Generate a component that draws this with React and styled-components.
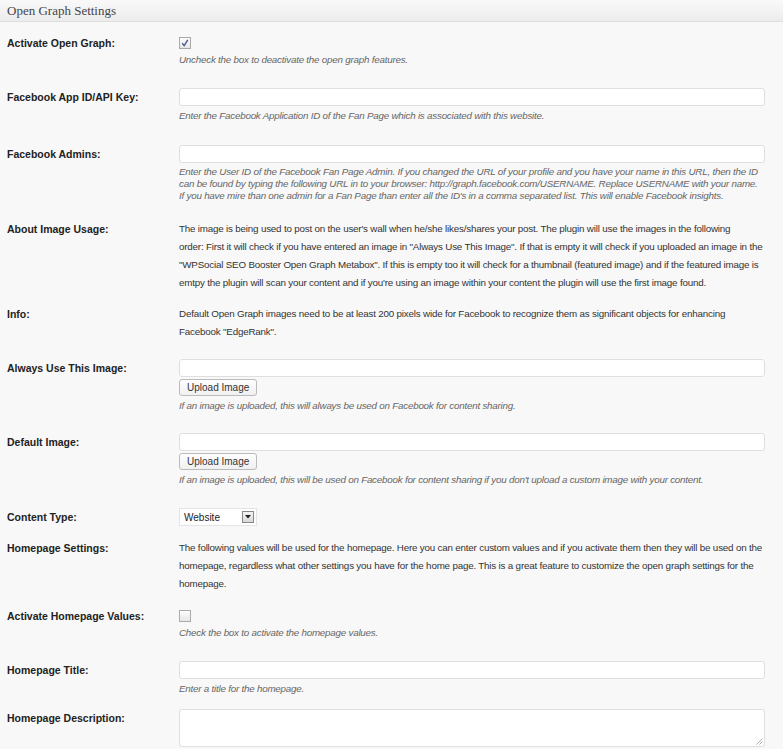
import React from "react";
import styled, { createGlobalStyle } from "styled-components";

const Global = createGlobalStyle`
  html, body {
    margin: 0;
    padding: 0;
    background: #f8f8f8;
  }
  body {
    font-family: "Liberation Sans", Arial, sans-serif;
    color: #333;
  }
`;

const Page = styled.div`
  width: 783px;
  min-height: 749px;
  background: #f8f8f8;
`;

const Header = styled.div`
  height: 22px;
  box-sizing: border-box;
  padding: 0 7px;
  display: flex;
  align-items: center;
  background: linear-gradient(#f9f9f9, #ececec);
  border-bottom: 1px solid #dfdfdf;
  font-family: "Liberation Serif", Georgia, serif;
  font-size: 13px;
  color: #464646;
`;

const Table = styled.div`
  display: flex;
  flex-direction: column;
  padding: 0 18px 0 7px;
`;

const Row = styled.div`
  display: grid;
  grid-template-columns: 172px 1fr;
  margin-top: ${(p) => p.$space}px;
`;

const Label = styled.div`
  font-weight: bold;
  font-size: 10.5px;
  line-height: 18px;
  color: #222;
`;

const Field = styled.div`
  display: flex;
  flex-direction: column;
  align-items: flex-start;
`;

const Text = styled.div`
  font-size: 9.8px;
  letter-spacing: -0.19px;
  line-height: 18px;
  color: #333;
`;

const Desc = styled.div`
  font-size: 9.8px;
  letter-spacing: -0.22px;
  font-style: italic;
  line-height: 12px;
  color: #666;
  margin-top: ${(p) => (p.$top != null ? p.$top : 4)}px;
`;

const CheckLine = styled.div`
  height: 18px;
  display: flex;
  align-items: center;
`;

const Box = styled.span`
  width: 10px;
  height: 10px;
  border: 1px solid #aaa;
  background: linear-gradient(#fdfdfd, #e6e6e6);
  display: flex;
  align-items: center;
  justify-content: center;
`;

const Input = styled.div`
  width: 100%;
  height: 18px;
  box-sizing: border-box;
  background: #fff;
  border: 1px solid #dfdfdf;
  border-radius: 3px;
`;

const Area = styled.div`
  position: relative;
  width: 100%;
  height: 38px;
  box-sizing: border-box;
  background: #fff;
  border: 1px solid #dfdfdf;
  border-radius: 3px;
`;

const Grip = styled.svg`
  position: absolute;
  right: 1px;
  bottom: 1px;
`;

const Button = styled.div`
  margin-top: 2px;
  height: 17px;
  box-sizing: border-box;
  padding: 0 7px;
  display: flex;
  align-items: center;
  border: 1px solid #bbb;
  border-radius: 3px;
  background: linear-gradient(#fefefe, #f0f0f0);
  font-size: 10px;
  color: #333;
`;

const Select = styled.div`
  width: 78px;
  height: 18px;
  box-sizing: border-box;
  background: #fff;
  border: 1px solid #e4e4e4;
  display: flex;
  align-items: center;
  justify-content: space-between;
  padding: 0 2px 0 4px;
  font-size: 10px;
  color: #222;
`;

const Arrow = styled.span`
  width: 12px;
  height: 12px;
  box-sizing: border-box;
  border: 1px solid #888;
  background: linear-gradient(#f4f4f4, #d8d8d8);
  display: flex;
  align-items: center;
  justify-content: center;
`;

const Check = ({ on }) => (
  <CheckLine>
    <Box>
      {on && (
        <svg width="8" height="8" viewBox="0 0 8 8">
          <path d="M1.2 4.2 L3.2 6.6 L6.8 0.8" fill="none" stroke="#4a5a8c" strokeWidth="1.4" />
        </svg>
      )}
    </Box>
  </CheckLine>
);

const App = () => (
  <Page>
    <Global />
    <Header>Open Graph Settings</Header>
    <Table>
      <Row $space={12}>
        <Label>Activate Open Graph:</Label>
        <Field>
          <Check on />
          <Desc $top={2}>Uncheck the box to deactivate the open graph features.</Desc>
        </Field>
      </Row>

      <Row $space={22}>
        <Label>Facebook App ID/API Key:</Label>
        <Field>
          <Input />
          <Desc>Enter the Facebook Application ID of the Fan Page which is associated with this website.</Desc>
        </Field>
      </Row>

      <Row $space={23}>
        <Label>Facebook Admins:</Label>
        <Field>
          <Input />
          <Desc $top={3}>
            Enter the User ID of the Facebook Fan Page Admin. If you changed the URL of your profile and you have your name in this URL, then the ID can be found by typing the following URL in to your browser: http://graph.facebook.com/USERNAME. Replace USERNAME with your name. If you have mire than one admin for a Fan Page than enter all the ID's in a comma separated list. This will enable Facebook insights.
          </Desc>
        </Field>
      </Row>

      <Row $space={18}>
        <Label>About Image Usage:</Label>
        <Text>
          The image is being used to post on the user's wall when he/she likes/shares your post. The plugin will use the images in the following
          <br />
          order: First it will check if you have entered an image in "Always Use This Image". If that is empty it will check if you uploaded an image in the "WPSocial SEO Booster Open Graph Metabox". If this is empty too it will check for a thumbnail (featured image) and if the featured image is emtpy the plugin will scan your content and if you're using an image within your content the plugin will use the first image found.
        </Text>
      </Row>

      <Row $space={13}>
        <Label>Info:</Label>
        <Text>
          Default Open Graph images need to be at least 200 pixels wide for Facebook to recognize them as significant objects for enhancing Facebook "EdgeRank".
        </Text>
      </Row>

      <Row $space={18}>
        <Label>Always Use This Image:</Label>
        <Field>
          <Input />
          <Button>Upload Image</Button>
          <Desc>If an image is uploaded, this will always be used on Facebook for content sharing.</Desc>
        </Field>
      </Row>

      <Row $space={21}>
        <Label>Default Image:</Label>
        <Field>
          <Input />
          <Button>Upload Image</Button>
          <Desc>If an image is uploaded, this will be used on Facebook for content sharing if you don't upload a custom image with your content.</Desc>
        </Field>
      </Row>

      <Row $space={22}>
        <Label>Content Type:</Label>
        <Field>
          <Select>
            Website
            <Arrow>
              <svg width="6" height="4" viewBox="0 0 6 4">
                <path d="M0 0 H6 L3 3.5 Z" fill="#222" />
              </svg>
            </Arrow>
          </Select>
        </Field>
      </Row>

      <Row $space={13}>
        <Label>Homepage Settings:</Label>
        <Text>
          The following values will be used for the homepage. Here you can enter custom values and if you activate them then they will be used on the homepage, regardless what other settings you have for the home page. This is a great feature to customize the open graph settings for the homepage.
        </Text>
      </Row>

      <Row $space={14}>
        <Label>Activate Homepage Values:</Label>
        <Field>
          <Check />
          <Desc $top={2}>Check the box to activate the homepage values.</Desc>
        </Field>
      </Row>

      <Row $space={22}>
        <Label>Homepage Title:</Label>
        <Field>
          <Input />
          <Desc>Enter a title for the homepage.</Desc>
        </Field>
      </Row>

      <Row $space={14}>
        <Label>Homepage Description:</Label>
        <Field>
          <Area>
            <Grip width="7" height="7" viewBox="0 0 7 7">
              <path d="M6.5 0.5 L0.5 6.5 M6.5 3.5 L3.5 6.5" stroke="#999" strokeWidth="0.8" />
            </Grip>
          </Area>
        </Field>
      </Row>
    </Table>
  </Page>
);

export default App;
